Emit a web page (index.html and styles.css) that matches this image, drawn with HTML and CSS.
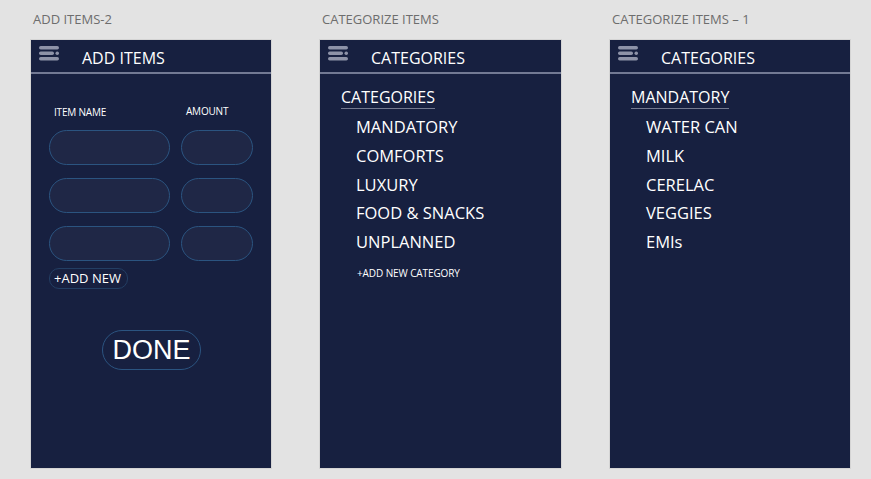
FILE: index.html
```html
<!DOCTYPE html>
<html lang="en">
<head>
    <meta charset="UTF-8">
    <meta name="viewport" content="width=device-width, initial-scale=1.0">
    <title>Budget Screens</title>
    <link rel="stylesheet" href="styles.css">
</head>
<body>
    <div class="board">
        <!-- add items screen -->
        <div class="artboard">
            <div class="artboard-label">ADD ITEMS-2</div>
            <div class="screen">
                <header class="bar">
                    <svg class="menu-icon" width="20" height="15" viewBox="0 0 20 15">
                        <rect x="0" y="0" width="20" height="3.5" rx="1.7"/>
                        <rect x="0" y="5.5" width="15" height="3.5" rx="1.7"/>
                        <rect x="16.5" y="5.5" width="3.5" height="3.5" rx="1.7"/>
                        <rect x="0" y="11" width="20" height="3.5" rx="1.7"/>
                    </svg>
                    <h1>ADD ITEMS</h1>
                </header>
                <div class="add-form">
                    <div class="form-head">
                        <span class="col-name">ITEM NAME</span>
                        <span class="col-amount">AMOUNT</span>
                    </div>
                    <div class="form-row">
                        <input type="text" class="field field-name">
                        <input type="text" class="field field-amount">
                    </div>
                    <div class="form-row">
                        <input type="text" class="field field-name">
                        <input type="text" class="field field-amount">
                    </div>
                    <div class="form-row">
                        <input type="text" class="field field-name">
                        <input type="text" class="field field-amount">
                    </div>
                    <button class="add-new">+ADD NEW</button>
                    <button class="done">DONE</button>
                </div>
            </div>
        </div>

        <!-- categories screen -->
        <div class="artboard">
            <div class="artboard-label">CATEGORIZE ITEMS</div>
            <div class="screen">
                <header class="bar">
                    <svg class="menu-icon" width="20" height="15" viewBox="0 0 20 15">
                        <rect x="0" y="0" width="20" height="3.5" rx="1.7"/>
                        <rect x="0" y="5.5" width="15" height="3.5" rx="1.7"/>
                        <rect x="16.5" y="5.5" width="3.5" height="3.5" rx="1.7"/>
                        <rect x="0" y="11" width="20" height="3.5" rx="1.7"/>
                    </svg>
                    <h1>CATEGORIES</h1>
                </header>
                <div class="list">
                    <div class="list-title">CATEGORIES</div>
                    <ul>
                        <li>MANDATORY</li>
                        <li>COMFORTS</li>
                        <li>LUXURY</li>
                        <li>FOOD &amp; SNACKS</li>
                        <li>UNPLANNED</li>
                    </ul>
                    <div class="add-category">+ADD NEW CATEGORY</div>
                </div>
            </div>
        </div>

        <!-- mandatory category screen -->
        <div class="artboard">
            <div class="artboard-label">CATEGORIZE ITEMS – 1</div>
            <div class="screen">
                <header class="bar">
                    <svg class="menu-icon" width="20" height="15" viewBox="0 0 20 15">
                        <rect x="0" y="0" width="20" height="3.5" rx="1.7"/>
                        <rect x="0" y="5.5" width="15" height="3.5" rx="1.7"/>
                        <rect x="16.5" y="5.5" width="3.5" height="3.5" rx="1.7"/>
                        <rect x="0" y="11" width="20" height="3.5" rx="1.7"/>
                    </svg>
                    <h1>CATEGORIES</h1>
                </header>
                <div class="list">
                    <div class="list-title">MANDATORY</div>
                    <ul>
                        <li>WATER CAN</li>
                        <li>MILK</li>
                        <li>CERELAC</li>
                        <li>VEGGIES</li>
                        <li>EMIs</li>
                    </ul>
                </div>
            </div>
        </div>
    </div>
</body>
</html>
```

FILE: styles.css
```css
body {
    margin: 0;
    padding: 0;
    background-color: #e3e3e3;
    font-family: "Open Sans", "Noto Sans", sans-serif;
}
.board {
    display: grid;
    grid-template-columns: 242px 243px 242px;
    column-gap: 47px;
    padding-left: 30px;
    padding-top: 11px;
}
.artboard-label {
    color: #6d6d6d;
    font-size: 13px;
    line-height: 16px;
    height: 16px;
    padding-left: 3px;
    margin-bottom: 12px;
}
.screen {
    height: 428px;
    background-color: #172040;
    border: 1px solid #d4d4d4;
    color: #ffffff;
}
.bar {
    display: flex;
    align-items: center;
    height: 32px;
    border-bottom: 2px solid #737a94;
    padding-left: 8px;
}
.menu-icon {
    fill: #8e93a8;
    margin-top: -6px;
}
.bar h1 {
    margin: 3px 0 0 23px;
    font-size: 16px;
    font-weight: normal;
}
.add-form {
    padding: 0 8px 0 18px;
}
.form-head {
    display: flex;
    font-size: 10px;
    margin-top: 30px;
    height: 14px;
    letter-spacing: -0.2px;
}
.col-name {
    width: 132px;
    padding-left: 5px;
    margin-top: 1px;
}
.form-row {
    display: flex;
    gap: 11px;
    margin-top: 12px;
}
.form-row + .form-row {
    margin-top: 13px;
}
.field {
    box-sizing: border-box;
    height: 35px;
    background-color: #1f2746;
    border: 1px solid #2b5480;
    border-radius: 18px;
    outline: none;
}
.field-name {
    width: 121px;
}
.field-amount {
    width: 72px;
}
.add-new {
    display: block;
    margin-top: 7px;
    height: 21px;
    padding: 0 6px 0 4px;
    background: transparent;
    border: 1px solid #233e63;
    border-radius: 10px;
    color: #ffffff;
    font-family: "Open Sans", "Noto Sans", sans-serif;
    font-size: 13px;
    line-height: 19px;
}
.done {
    display: block;
    margin: 41px 0 0 53px;
    width: 99px;
    height: 40px;
    background: transparent;
    border: 1px solid #2b5480;
    border-radius: 20px;
    color: #ffffff;
    font-family: "Liberation Sans", Arial, sans-serif;
    font-size: 27px;
    padding: 0;
}
.list {
    padding: 12px 0 0 21px;
}
.list-title {
    display: inline-block;
    font-size: 16px;
    line-height: 20px;
    padding-bottom: 1px;
    border-bottom: 1px solid #747a90;
}
.list ul {
    list-style: none;
    margin: 0;
    padding: 4px 0 0 15px;
}
.list li {
    font-size: 16.5px;
    line-height: 28.8px;
}
.add-category {
    font-size: 10px;
    padding: 9px 0 0 16px;
    letter-spacing: -0.1px;
}
```
